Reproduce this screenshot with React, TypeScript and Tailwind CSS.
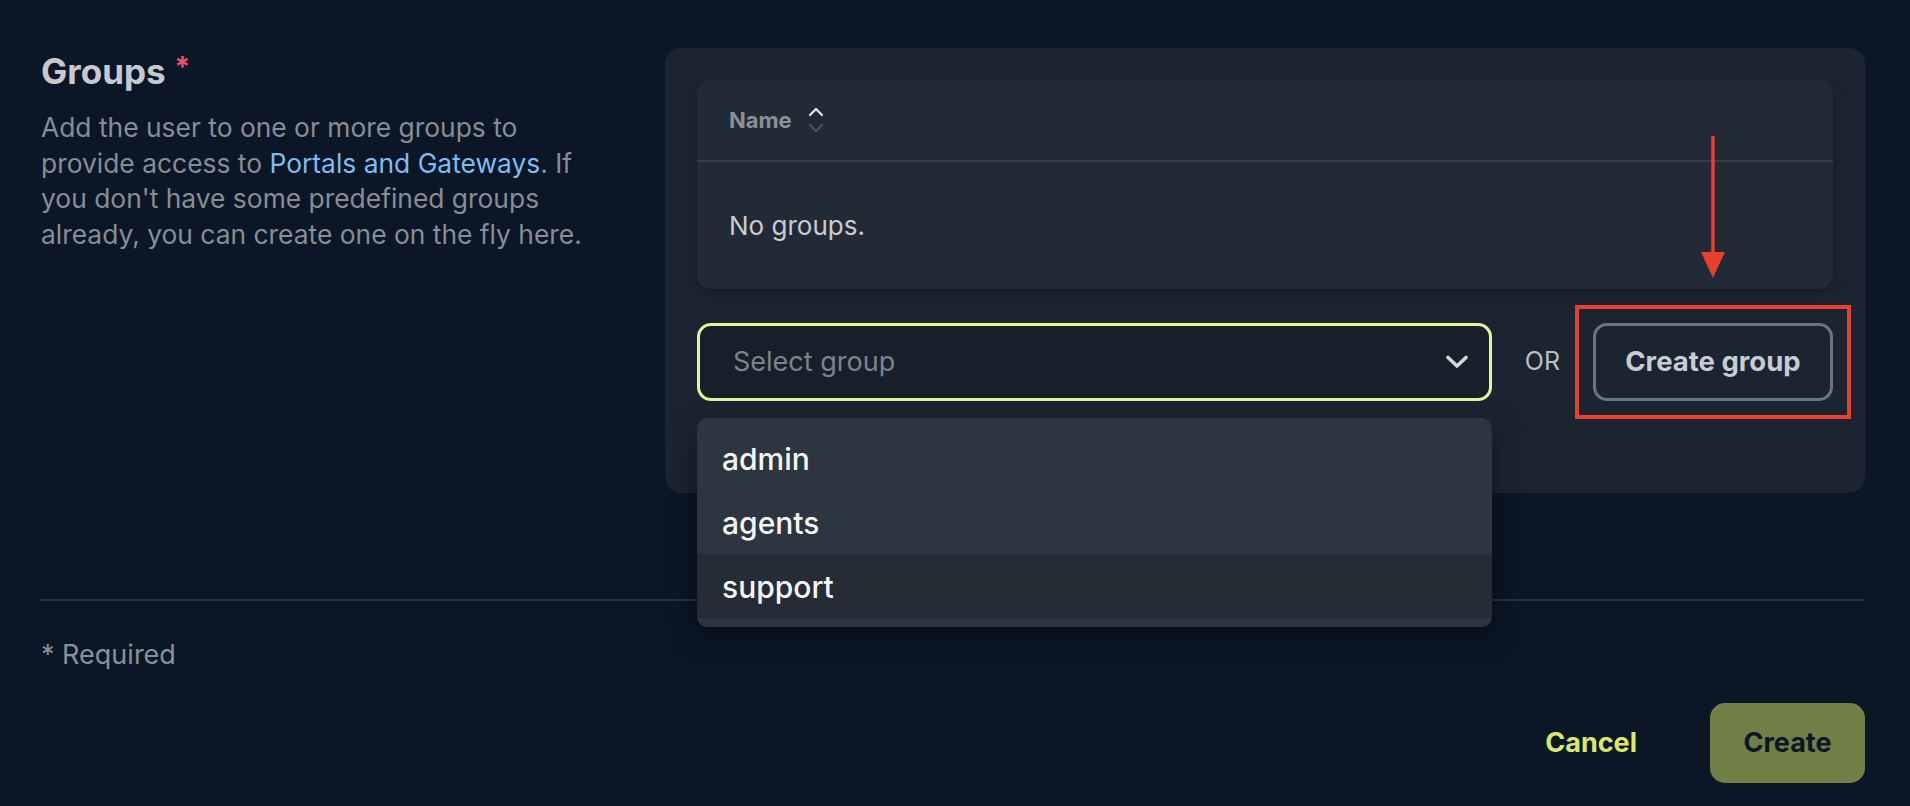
import React from "react";

const groups = ["admin", "agents", "support"];

function SortIcon() {
  return (
    <svg width="16" height="28" viewBox="0 0 16 28" fill="none" className="ml-[16px]">
      <polyline points="2,9 8,3 14,9" stroke="#e9ebee" strokeWidth="2.2" strokeLinecap="round" strokeLinejoin="round" />
      <polyline points="2,19 8,25 14,19" stroke="#4a545f" strokeWidth="2.2" strokeLinecap="round" strokeLinejoin="round" />
    </svg>
  );
}

function Chevron() {
  return (
    <svg width="24" height="14" viewBox="0 0 24 14" fill="none">
      <polyline points="3,2.5 12,11 21,2.5" stroke="#d2d5d9" strokeWidth="3.6" strokeLinecap="round" strokeLinejoin="round" />
    </svg>
  );
}

function GroupSelect() {
  return (
    <div className="relative flex-1">
      <div className="flex h-[78px] items-center justify-between rounded-[14px] border-[3px] border-[#e6f29c] bg-[#17202a] pl-[33px] pr-[20px]">
        <span className="text-[27px] text-[#7d838b]">Select group</span>
        <Chevron />
      </div>
      <div className="absolute left-0 right-0 top-[calc(100%+17px)] z-10 overflow-hidden rounded-[10px] bg-[#2c3540] pt-[8px] pb-[9px] shadow-[0_10px_30px_rgba(0,0,0,0.45)]">
        {groups.map((g) => (
          <div
            key={g}
            className={
              g === "support"
                ? "flex h-[64px] items-center bg-[#252c36] px-[25px] pt-[2px] text-[30px] font-medium text-[#f4f5f7]"
                : "flex h-[64px] items-center px-[25px] pt-[2px] text-[30px] font-medium text-[#f4f5f7]"
            }
          >
            {g}
          </div>
        ))}
      </div>
    </div>
  );
}

function CreateGroupButton() {
  return (
    <div className="relative">
      <button className="h-[78px] w-[240px] rounded-[14px] border-[3px] border-[#6b7581] bg-[#1b2531] text-[27.5px] font-bold text-[#c9ccd1]">
        Create group
      </button>
      {/* annotation */}
      <div className="pointer-events-none absolute -inset-[18px] border-[4.5px] border-[#e8402a]" />
      <svg
        className="pointer-events-none absolute left-1/2 top-[-187px] -translate-x-1/2"
        width="26"
        height="142"
        viewBox="0 0 26 142"
      >
        <line x1="13" y1="0" x2="13" y2="120" stroke="#e8402a" strokeWidth="3.5" />
        <polygon points="1,116 25,116 13,142" fill="#e8402a" />
      </svg>
    </div>
  );
}

export default function App() {
  return (
    <div
      className="min-h-[806px] w-full bg-[#0b1727] pl-[41px] pr-[45px] pt-12"
      style={{ fontFamily: "Inter, 'Noto Sans', sans-serif" }}
    >
      <div className="flex gap-[68px]">
        <div className="w-[556px] shrink-0 pt-[3px]">
          <div className="flex items-start">
            <h2 className="text-[35px] font-bold leading-[40px] text-[#c6c9ce]">Groups</h2>
            <span className="ml-[9px] mt-[2px] text-[28px] font-bold leading-[28px] text-[#f0506e]">*</span>
          </div>
          <p className="mt-[19px] text-[26.4px] leading-[35.5px] text-[#878d96]">
            Add the user to one or more groups to provide access to{" "}
            <a className="text-[#7dbdf6]">Portals and Gateways</a>. If you don't have some predefined groups
            already, you can create one on the fly here.
          </p>
        </div>

        <div className="flex-1 rounded-[16px] bg-[#1b2531] px-8 pt-8 pb-[92px]">
          <div className="rounded-[14px] bg-[#212a35] shadow-[0_4px_10px_rgba(0,0,0,0.25)]">
            <div className="flex h-[82px] items-center border-b-2 border-[#363e49] px-8">
              <span className="text-[22px] font-bold text-[#8a9098]">Name</span>
              <SortIcon />
            </div>
            <div className="flex h-[127px] items-center px-8">
              <span className="text-[26px] text-[#c9ccd1]">No groups.</span>
            </div>
          </div>

          <div className="mt-[34px] flex items-center gap-[33px]">
            <GroupSelect />
            <span className="text-[25px] text-[#b9bec4]">OR</span>
            <CreateGroupButton />
          </div>
        </div>
      </div>

      <div className="mt-[106px] h-[2px] bg-[#28313d]" />

      <div className="mt-[36px] text-[27px] leading-[35px] text-[#8a9099]">* Required</div>

      <div className="mt-[31px] flex items-center justify-end">
        <button className="mr-[73px] text-[27px] font-bold text-[#d9e86a]">Cancel</button>
        <button className="h-[80px] w-[155px] rounded-[15px] bg-[#6f7f46] text-[27px] font-bold text-[#0c1626]">
          Create
        </button>
      </div>
    </div>
  );
}
